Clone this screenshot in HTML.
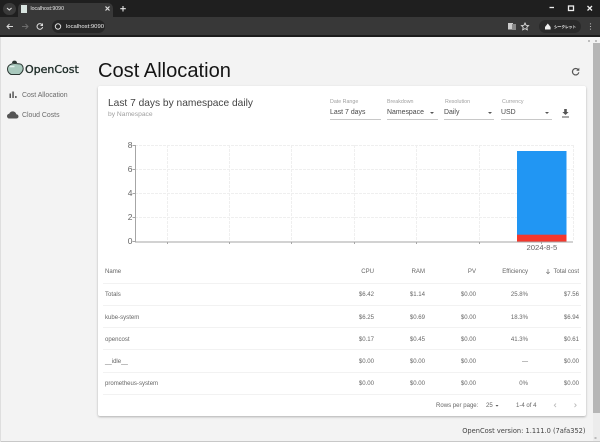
<!DOCTYPE html>
<html><head><meta charset="utf-8">
<style>
html,body{margin:0;padding:0;width:600px;height:442px;overflow:hidden;background:#f3f3f3;font-family:"Liberation Sans","Noto Sans CJK JP",sans-serif}
.a{position:absolute;white-space:nowrap}
.r{position:absolute;white-space:nowrap;text-align:right}
.c{color:#666;font-size:6.05px;line-height:8px}
.l{color:#a0a0a0;font-size:5.3px;line-height:7px}
.v{color:#484848;font-size:6.9px;line-height:10px;letter-spacing:.02px}
.u{position:absolute;height:1px;background:#c8c8c8;top:119px}
.h{position:absolute;left:103px;width:478px;height:1px;background:#f2f2f2}
svg{position:absolute;left:0;top:0}
</style></head><body>
<!-- browser chrome -->
<div class="a" style="left:0;top:0;width:600px;height:17px;background:#1f1f1f"></div>
<div class="a" style="left:0;top:17px;width:600px;height:18px;background:#383838"></div>
<div class="a" style="left:0;top:35px;width:600px;height:2px;background:#1c1c1c"></div>
<div class="a" style="left:3px;top:3px;width:13px;height:12px;border-radius:6px;background:#3a3a3a"></div>
<div class="a" style="left:18px;top:3px;width:95px;height:14px;border-radius:5px 5px 0 0;background:#383838"></div>
<div class="a" style="left:21px;top:5px;width:6px;height:8px;background:#d8e4e0"></div>
<div class="a" style="left:30.500px;top:4px;font-size:5.200px;line-height:10px;color:#e8e8e8">localhost:9090</div>
<div class="a" style="left:52px;top:20px;width:53px;height:13px;border-radius:7px;background:#262626"></div>
<div class="a" style="left:66px;top:22px;font-size:5.900px;line-height:10px;color:#eee">localhost:9090</div>
<div class="a" style="left:539px;top:20px;width:42px;height:13px;border-radius:7px;background:#2a2a2a"></div>
<div class="a" style="left:554px;top:22px;font-size:3.700px;line-height:10px;color:#fff;-webkit-text-stroke:.15px #fff">シークレット</div>
<svg width="600" height="442" viewBox="0 0 600 442" fill="none">
<!-- chrome icons -->
<path d="M7 8l2.300 2 2.300-2" stroke="#ddd" stroke-width="1.100"/>
<path d="M105.500 6.500l4 4m0-4l-4 4" stroke="#ddd" stroke-width="1.200"/>
<path d="M123 6v5.500M120.300 8.700h5.500" stroke="#e6e6e6" stroke-width="1.100"/>
<path d="M7 26.500h6M9.500 24l-2.500 2.500 2.500 2.500" stroke="#d8d8d8" stroke-width="1"/>
<path d="M22 26.500h6M25.500 24l2.500 2.500-2.500 2.500" stroke="#6c6c6c" stroke-width="1"/>
<path d="M42 24.700a2.800 2.800 0 1 0 .6 2.200M42.500 23.500v2h-2" stroke="#ddd" stroke-width="1"/>
<circle cx="58" cy="26.500" r="2.700" stroke="#ddd" stroke-width="1"/>
<path d="M549.500 7.500h4.500" stroke="#eee" stroke-width="1.300"/>
<rect x="568.500" y="6" width="5" height="4.500" stroke="#eee" stroke-width="1.300"/>
<path d="M587.500 6l4.500 4.500m0-4.500l-4.500 4.500" stroke="#eee" stroke-width="1.300"/>
<rect x="508" y="23" width="5" height="6.500" fill="#ccc"/><rect x="512" y="24" width="4" height="6" fill="#888"/>
<path d="M525 23l1.100 2.300 2.500.3-1.800 1.700.5 2.500-2.300-1.200-2.300 1.200.5-2.500-1.800-1.700 2.500-.3z" stroke="#ddd" stroke-width=".9"/>
<path d="M545 27l2.800-3.500 2.800 3.500v2.500h-5.600z" fill="#eee"/>
<path d="M590.500 23.500v.8M590.500 26.100v.8M590.500 28.700v.8" stroke="#ddd" stroke-width="1.100"/>
<!-- scrollbar -->
<rect x="593" y="43" width="7" height="370" fill="#b6b6b6"/>
<rect x="593" y="413" width="7" height="28" fill="#ececec"/>
<path d="M588 41h2M595 41h2M594.500 438h2" stroke="#888" stroke-width="1"/>
<rect x="0" y="441" width="600" height="1" fill="#c8c8c8"/>
<rect x="0" y="37" width="1" height="405" fill="#dedede"/>
<!-- logo -->
<path d="M7.500 69c0-3.300 3-5.500 7.500-5.500 2 0 3.500.4 4.500.4 2 0 3.800 2.200 3.700 4.800-.1 2.500-1.700 4.300-3.700 5.800h-8.500C8.800 73.300 7.500 71.300 7.500 69z" fill="#a9c9bd" stroke="#2c3733" stroke-width="1"/>
<path d="M12 63c0-1.500 1-2.400 2.500-2.400 1.400 0 2.500.9 2.500 2.400z" fill="#2c3733"/>
<path d="M9.500 66.500h5" stroke="#e4f0ec" stroke-width="1.500"/>
<!-- nav icons -->
<path d="M9.500 93.500h1.500V98H9.500zM12.300 91.500h1.500V98h-1.500zM15.100 96h1.500v2h-1.500z" fill="#555"/>
<path d="M9.500 118.500c-1.700 0-2.500-1.200-2.500-2.400 0-1.300 1-2.200 2.200-2.300.6-1.600 2-2.400 3.500-2.400 1.800 0 3.200 1.100 3.600 2.900 1.300.1 2.200 1 2.200 2.200 0 1.200-1 2-2.200 2z" fill="#555"/>
<!-- refresh -->
<path d="M578.200 69.800a3.200 3.200 0 1 0 .6 2.500" stroke="#555" stroke-width="1.200"/>
<path d="M579.300 67.700v3.100h-3.100z" fill="#555"/>
</svg>
<!-- sidebar -->
<div class="a" style="left:25px;top:60px;font-size:11px;line-height:19px;color:#1d2b27;font-family:'DejaVu Sans',sans-serif;-webkit-text-stroke:.35px #1d2b27">OpenCost</div>
<div class="a" style="left:22px;top:91px;font-size:6.900px;line-height:10px;color:#6a6a6a">Cost Allocation</div>
<div class="a" style="left:22px;top:111px;font-size:6.900px;line-height:10px;color:#6a6a6a">Cloud Costs</div>
<div class="a" style="left:98px;top:58px;font-size:20.100px;line-height:26px;color:#151515">Cost Allocation</div>
<!-- card -->
<div class="a" style="left:98px;top:86px;width:487.500px;height:330px;background:#fff;border-radius:2px;box-shadow:0 1px 2px rgba(0,0,0,.28)"></div>
<div class="a" style="left:108px;top:97px;font-size:10.200px;line-height:13px;color:#444">Last 7 days by namespace daily</div>
<div class="a" style="left:108px;top:110px;font-size:6.700px;line-height:10px;color:#a0a0a0">by Namespace</div>
<div class="a l" style="left:330px;top:99px">Date Range</div>
<div class="a v" style="left:330px;top:108px">Last 7 days</div>
<div class="u" style="left:330px;width:51px"></div>
<div class="a l" style="left:387px;top:99px">Breakdown</div>
<div class="a v" style="left:387px;top:108px">Namespace</div>
<div class="u" style="left:387px;width:51px"></div>
<div class="a l" style="left:445px;top:99px">Resolution</div>
<div class="a v" style="left:444px;top:108px">Daily</div>
<div class="u" style="left:444px;width:50px"></div>
<div class="a l" style="left:502px;top:99px">Currency</div>
<div class="a v" style="left:501px;top:108px">USD</div>
<div class="u" style="left:501px;width:51px"></div>
<svg width="600" height="442" viewBox="0 0 600 442" fill="none">
<path d="M430 112h4l-2 2zM488 112h4l-2 2zM545 112h4l-2 2z" fill="#555"/>
<path d="M564.200 109h2.600v3h1.800l-3.100 3-3.100-3h1.800zM562 116.500h7v1h-7z" fill="#555"/>
<!-- grid -->
<g stroke="#efefef" stroke-width="1" stroke-dasharray="3 1">
<path d="M135 145.500H573M135 169.500H573M135 193.500H573M135 217.500H573"/>
<path d="M167.500 145V241M229.500 145V241M291.500 145V241M354.500 145V241M416.500 145V241M479.500 145V241M573.500 145V241"/>
</g>
<rect x="517" y="151" width="49.500" height="84" fill="#2196f3"/>
<rect x="517" y="234.700" width="49.500" height="7" fill="#f4372c"/>
<path d="M135.500 145V242H573" stroke="#a6a6a6" stroke-width="1"/>
<path d="M132.500 145.500h3M132.500 169.500h3M132.500 193.500h3M132.500 217.500h3M132.500 241.500h3M167.500 242v2M229.500 242v2M291.500 242v2M354.500 242v2M416.500 242v2M479.500 242v2M541.500 242v2" stroke="#a6a6a6" stroke-width="1"/>
<!-- table arrow and pagination -->
<path d="M548 269v4.500M546.300 272l1.700 1.700 1.700-1.700" stroke="#777" stroke-width=".7"/>
<path d="M495.500 405h3l-1.500 1.600z" fill="#555"/>
<path d="M556 403.500l-1.700 1.800 1.700 1.800M574.500 403.500l1.700 1.800-1.700 1.800" stroke="#bbb" stroke-width=".9"/>
</svg>
<div class="r" style="right:467.500px;top:140px;font-size:8.500px;line-height:10px;color:#666">8</div>
<div class="r" style="right:467.500px;top:164px;font-size:8.500px;line-height:10px;color:#666">6</div>
<div class="r" style="right:467.500px;top:188px;font-size:8.500px;line-height:10px;color:#666">4</div>
<div class="r" style="right:467.500px;top:212px;font-size:8.500px;line-height:10px;color:#666">2</div>
<div class="r" style="right:467.500px;top:236px;font-size:8.500px;line-height:10px;color:#666">0</div>
<div class="a" style="left:526.500px;top:243px;font-size:7.700px;line-height:10px;color:#666">2024-8-5</div>
<!-- table -->
<div class="h" style="top:283px"></div><div class="h" style="top:305px"></div><div class="h" style="top:327px"></div><div class="h" style="top:349px"></div><div class="h" style="top:372px"></div><div class="h" style="top:394px"></div>
<div class="a c" style="left:105px;top:267.500px">Name</div>
<div class="r c" style="right:226px;top:267.500px">CPU</div>
<div class="r c" style="right:175px;top:267.500px">RAM</div>
<div class="r c" style="right:124px;top:267.500px">PV</div>
<div class="r c" style="right:72px;top:267.500px">Efficiency</div>
<div class="r c" style="right:21px;top:267.500px">Total cost</div>

<div class="a c" style="left:105px;top:291px">Totals</div>
<div class="r c" style="right:226px;top:291px">$6.42</div><div class="r c" style="right:175px;top:291px">$1.14</div><div class="r c" style="right:124px;top:291px">$0.00</div><div class="r c" style="right:72px;top:291px">25.8%</div><div class="r c" style="right:21px;top:291px">$7.56</div>

<div class="a c" style="left:105px;top:314px">kube-system</div>
<div class="r c" style="right:226px;top:314px">$6.25</div><div class="r c" style="right:175px;top:314px">$0.69</div><div class="r c" style="right:124px;top:314px">$0.00</div><div class="r c" style="right:72px;top:314px">18.3%</div><div class="r c" style="right:21px;top:314px">$6.94</div>

<div class="a c" style="left:105px;top:336px">opencost</div>
<div class="r c" style="right:226px;top:336px">$0.17</div><div class="r c" style="right:175px;top:336px">$0.45</div><div class="r c" style="right:124px;top:336px">$0.00</div><div class="r c" style="right:72px;top:336px">41.3%</div><div class="r c" style="right:21px;top:336px">$0.61</div>

<div class="a c" style="left:105px;top:358px">__idle__</div>
<div class="r c" style="right:226px;top:358px">$0.00</div><div class="r c" style="right:175px;top:358px">$0.00</div><div class="r c" style="right:124px;top:358px">$0.00</div><div class="r c" style="right:72px;top:358px">—</div><div class="r c" style="right:21px;top:358px">$0.00</div>

<div class="a c" style="left:105px;top:380px">prometheus-system</div>
<div class="r c" style="right:226px;top:380px">$0.00</div><div class="r c" style="right:175px;top:380px">$0.00</div><div class="r c" style="right:124px;top:380px">$0.00</div><div class="r c" style="right:72px;top:380px">0%</div><div class="r c" style="right:21px;top:380px">$0.00</div>

<div class="a c" style="left:436px;top:402px">Rows per page:</div>
<div class="a c" style="left:486px;top:402px">25</div>
<div class="a c" style="left:516px;top:402px">1-4 of 4</div>
<div class="r" style="right:14.500px;top:426px;font-size:6.650px;line-height:10px;color:#444;font-family:'DejaVu Sans',sans-serif">OpenCost version: 1.111.0 (7afa352)</div>
</body></html>
